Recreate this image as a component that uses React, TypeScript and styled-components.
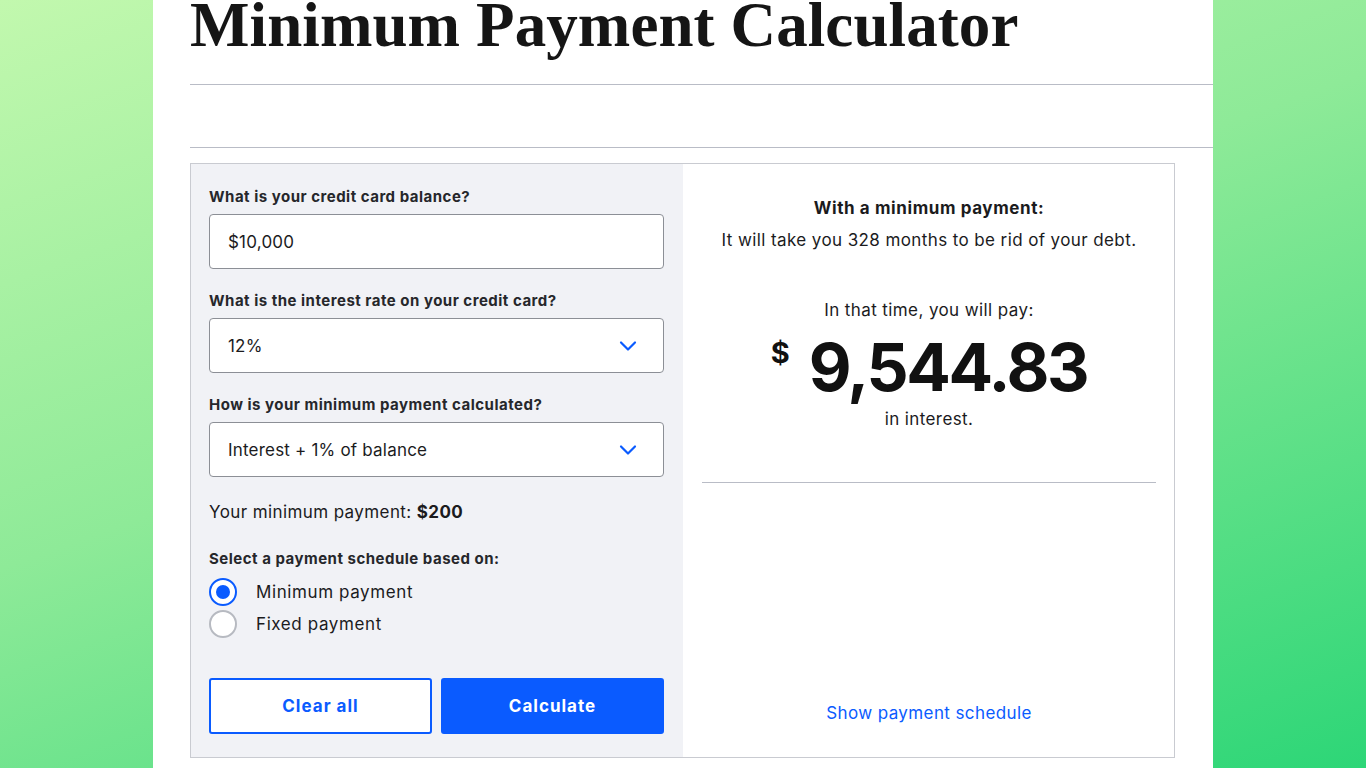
import React from "react";
import styled, { createGlobalStyle } from "styled-components";

const GlobalStyle = createGlobalStyle`
  html, body { margin: 0; padding: 0; }
  body {
    font-family: Inter, "Open Sans", sans-serif;
    color: #1b1b1d;
    background: #fff;
    letter-spacing: 0.4px;
  }
  * { box-sizing: border-box; }
`;

const Page = styled.div`
  width: 1366px;
  height: 768px;
  overflow: hidden;
  background: linear-gradient(160deg, #c2f8ae 0%, #8eea98 45%, #2dd677 100%);
  display: flex;
  justify-content: center;
`;

const Sheet = styled.main`
  width: 1060px;
  height: 768px;
  background: #fff;
  padding-left: 37px;
`;

const Title = styled.h1`
  margin: 0;
  font-family: "Liberation Serif", "Times New Roman", serif;
  font-weight: 700;
  font-size: 63px;
  line-height: 50px;
  height: 50px;
  color: #151515;
  letter-spacing: 0.1px;
  white-space: nowrap;
`;

const Rule = styled.hr<{ $gap: number }>`
  margin: ${(p) => p.$gap}px 0 0 0;
  border: 0;
  border-top: 1px solid #b9bcc6;
  height: 0;
`;

const Calculator = styled.section`
  margin-top: 15px;
  width: 985px;
  height: 595px;
  border: 1px solid #c9cbd1;
  display: grid;
  grid-template-columns: 492px 1fr;
`;

const FormPane = styled.div`
  background: #f1f2f6;
  padding: 23px 18px 0 18px;
  display: flex;
  flex-direction: column;
`;

const Label = styled.div<{ $top?: number }>`
  font-size: 15px;
  font-weight: 700;
  line-height: 20px;
  color: #26272b;
  margin-top: ${(p) => p.$top ?? 0}px;
  letter-spacing: 0.5px;
`;

const Box = styled.div`
  margin-top: 7px;
  width: 455px;
  height: 55px;
  border: 1px solid #8c8f96;
  border-radius: 4px;
  background: #fff;
  display: flex;
  align-items: center;
  justify-content: space-between;
  padding: 0 26px 0 18px;
  font-size: 17px;
  letter-spacing: 0.2px;
  color: #1b1b1d;
`;

const Summary = styled.div`
  margin-top: 23px;
  font-size: 17px;
  line-height: 24px;
  color: #1b1b1d;
  b { font-weight: 700; }
`;

const RadioGroup = styled.div`
  margin-top: 7px;
  display: flex;
  flex-direction: column;
`;

const RadioRow = styled.label`
  height: 32px;
  display: flex;
  align-items: center;
  gap: 19px;
  font-size: 17px;
  letter-spacing: 0.6px;
  color: #1b1b1d;
`;

const RadioDot = styled.span<{ $on?: boolean }>`
  width: 28px;
  height: 28px;
  border-radius: 50%;
  background: #fff;
  border: 2px solid ${(p) => (p.$on ? "#0a5bff" : "#b7bac1")};
  display: flex;
  align-items: center;
  justify-content: center;
  &::after {
    content: "";
    width: 14px;
    height: 14px;
    border-radius: 50%;
    background: ${(p) => (p.$on ? "#0a5bff" : "transparent")};
  }
`;

const Buttons = styled.div`
  margin-top: 38px;
  display: grid;
  grid-template-columns: 223px 223px;
  gap: 9px;
`;

const Button = styled.button<{ $primary?: boolean }>`
  height: 56px;
  border-radius: 3px;
  border: 2px solid #0a5bff;
  background: ${(p) => (p.$primary ? "#0a5bff" : "#fff")};
  color: ${(p) => (p.$primary ? "#fff" : "#0a5bff")};
  font-family: Inter, sans-serif;
  font-size: 17px;
  font-weight: 700;
  letter-spacing: 1px;
`;

const ResultPane = styled.div`
  background: #fff;
  padding: 0 18px 0 19px;
  display: flex;
  flex-direction: column;
  align-items: center;
`;

const ResultHead = styled.div`
  margin-top: 33px;
  font-size: 17px;
  font-weight: 700;
  line-height: 22px;
  letter-spacing: 0.6px;
`;

const ResultText = styled.div<{ $top: number }>`
  margin-top: ${(p) => p.$top}px;
  font-size: 17px;
  line-height: 24px;
`;

const Amount = styled.div`
  margin-top: 12px;
  display: flex;
  align-items: flex-start;
  gap: 19px;
  font-weight: 700;
  color: #111;
  letter-spacing: 0;
`;

const Currency = styled.span`
  font-size: 29px;
  line-height: 38px;
  font-weight: 700;
`;

const Figure = styled.span`
  font-size: 66px;
  line-height: 66px;
  letter-spacing: -2.4px;
`;

const Divider = styled.hr`
  margin: 51px 0 0 0;
  width: 100%;
  border: 0;
  border-top: 1px solid #b9bcc6;
`;

const Spacer = styled.div`
  flex: 1;
`;

const Link = styled.a`
  margin-bottom: 32px;
  font-size: 17px;
  line-height: 24px;
  color: #0a5bff;
  text-decoration: none;
`;

const Chevron = () => (
  <svg width="18" height="12" viewBox="0 0 18 12" fill="none">
    <path d="M2 2.5 L9 9.5 L16 2.5" stroke="#0a5bff" strokeWidth="2.2" strokeLinecap="round" strokeLinejoin="round" />
  </svg>
);

export default function App() {
  return (
    <>
      <GlobalStyle />
      <Page>
        <Sheet>
          <Title>Minimum Payment Calculator</Title>
          <Rule $gap={34} />
          <Rule $gap={62} />
          <Calculator>
            <FormPane>
              <Label>What is your credit card balance?</Label>
              <Box>$10,000</Box>
              <Label $top={22}>What is the interest rate on your credit card?</Label>
              <Box>
                12%
                <Chevron />
              </Box>
              <Label $top={22}>How is your minimum payment calculated?</Label>
              <Box>
                Interest + 1% of balance
                <Chevron />
              </Box>
              <Summary>
                Your minimum payment: <b>$200</b>
              </Summary>
              <Label $top={25}>Select a payment schedule based on:</Label>
              <RadioGroup>
                <RadioRow>
                  <RadioDot $on />
                  Minimum payment
                </RadioRow>
                <RadioRow>
                  <RadioDot />
                  Fixed payment
                </RadioRow>
              </RadioGroup>
              <Buttons>
                <Button>Clear all</Button>
                <Button $primary>Calculate</Button>
              </Buttons>
            </FormPane>
            <ResultPane>
              <ResultHead>With a minimum payment:</ResultHead>
              <ResultText $top={9}>It will take you 328 months to be rid of your debt.</ResultText>
              <ResultText $top={46}>In that time, you will pay:</ResultText>
              <Amount>
                <Currency>$</Currency>
                <Figure>9,544.83</Figure>
              </Amount>
              <ResultText $top={7}>in interest.</ResultText>
              <Divider />
              <Spacer />
              <Link href="#">Show payment schedule</Link>
            </ResultPane>
          </Calculator>
        </Sheet>
      </Page>
    </>
  );
}
